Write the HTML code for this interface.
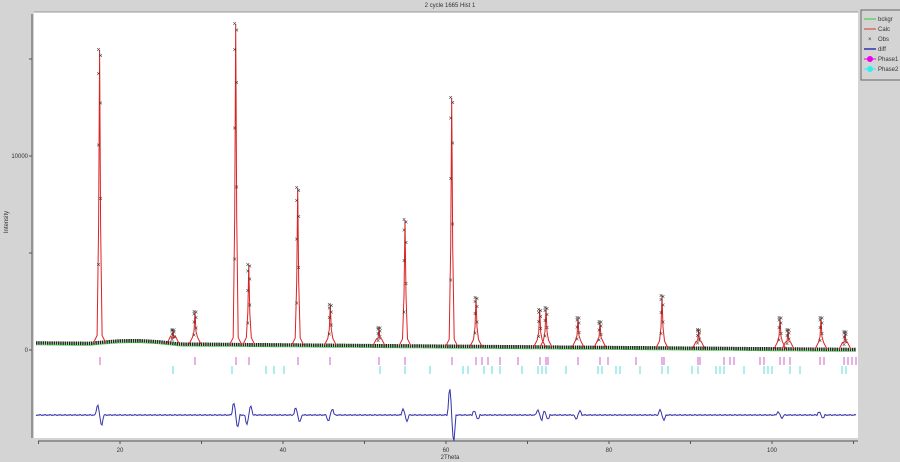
<!DOCTYPE html>
<html><head><meta charset="utf-8"><style>
html,body{margin:0;padding:0;background:#d4d4d4;width:900px;height:462px;overflow:hidden}
svg{display:block}
text{font-family:"Liberation Sans",sans-serif;fill:#333}
</style></head><body>
<svg id="s" width="900" height="462" xmlns="http://www.w3.org/2000/svg">
<rect x="0" y="0" width="900" height="462" fill="#d4d4d4"/>
<rect x="34" y="12" width="824" height="426" fill="#fff"/>
<line x1="32" y1="14" x2="32" y2="438" stroke="#555" stroke-width="1"/>
<line x1="34" y1="12" x2="858" y2="12" stroke="#999"/>
<line x1="38" y1="441" x2="858" y2="441" stroke="#555"/>
<text x="450" y="7" font-size="6" text-anchor="middle">2 cycle 1665 Hist 1</text>
<text x="450" y="459" font-size="6" text-anchor="middle">2Theta</text>
<text x="8" y="222" font-size="6" text-anchor="middle" transform="rotate(-90 8 222)">Intensity</text>
<text x="28" y="158" font-size="6" text-anchor="end">10000</text>
<line x1="29" y1="156" x2="32" y2="156" stroke="#555"/>
<text x="28" y="352" font-size="6" text-anchor="end">0</text>
<line x1="29" y1="350" x2="32" y2="350" stroke="#555"/>
<line x1="29" y1="59" x2="32" y2="59" stroke="#555"/>
<line x1="29" y1="253" x2="32" y2="253" stroke="#555"/>
<g id="g"></g>
<rect x="861" y="10" width="40" height="70" fill="#d4d4d4" stroke="#666"/>
<line x1="864" y1="19" x2="876" y2="19" stroke="#3c3"/><text x="878" y="21" font-size="6">bckgr</text>
<line x1="864" y1="29" x2="876" y2="29" stroke="#d33"/><text x="878" y="31" font-size="6">Calc</text>
<text x="868" y="41" font-size="6">×</text><text x="878" y="41" font-size="6">Obs</text>
<line x1="864" y1="49" x2="876" y2="49" stroke="#33a" stroke-width="1.5"/><text x="878" y="51" font-size="6">diff</text>
<circle cx="870" cy="59" r="3" fill="#e0e"/><line x1="864" y1="59" x2="876" y2="59" stroke="#e0e"/><text x="878" y="61" font-size="6">Phase1</text>
<circle cx="870" cy="69" r="3" fill="#3ee"/><line x1="864" y1="69" x2="876" y2="69" stroke="#3ee"/><text x="878" y="71" font-size="6">Phase2</text>
</svg>
<script>
var g=document.getElementById('g'),h='';
function X(t){return 38.5+(t-10)*8.15}
for(var t=10;t<=110;t+=10){var x=X(t);h+='<line x1="'+x+'" y1="441" x2="'+x+'" y2="444" stroke="#555"/>';
if(t%20==0)h+='<text x="'+x+'" y="452" font-size="6" text-anchor="middle">'+t+'</text>';}
function B(x){var b=343+(x-40)*0.008;if(x>90&&x<180)b-=3*Math.sin((x-90)/90*Math.PI);return b}
var bg='';for(var x=36;x<=856;x+=4)bg+=(x==36?'M':'L')+x+' '+B(x).toFixed(1);
h+='<path d="'+bg+'" fill="none" stroke="#1a2a1a" stroke-width="3.5" stroke-dasharray="1.5 0.7"/>';
h+='<path d="'+bg+'" fill="none" stroke="#3c3" stroke-width="0.6" transform="translate(0,2)"/>';
var P=[[99.6,50],[173,330],[195,312],[235.7,24],[248.8,265],[297.7,188],[330.3,305],[379,328],[405,220],[451.7,98],[476,298],[539.7,310],[546,308],[578,318],[600,322],[662,296],[698.6,330],[780,318],[788,330],[821,318],[845,332]];
var d='',o='';
P.forEach(function(p){var x=p[0],b=B(x),top=p[1];
d+='M'+(x-6)+' '+b+'L'+(x-2.5)+' '+(b-7)+'L'+(x-1)+' '+(b-(b-top)*0.4)+'L'+x+' '+top+'L'+(x+1)+' '+(b-(b-top)*0.4)+'L'+(x+2.5)+' '+(b-7)+'L'+(x+6)+' '+b;
var n=7;for(var i=0;i<n;i++){var yy=top+(b-top)*i*i/(n*n);o+='<text x="'+(x+(i%2?1:-1)*1)+'" y="'+(yy+2)+'" font-size="7" text-anchor="middle" fill="#333">×</text>';}
});
h+='<path d="'+d+'" fill="none" stroke="#d22" stroke-width="1"/>'+o;
var M=[100,195,236,249,298,330,379,405,452,476,482,488,500,518,540,546,548,578,600,608,636,662,664,698,700,724,730,734,760,764,780,784,790,820,824,844,848,852,856];
var C=[173,232,266,274,284,380,405,430,463,468,484,492,500,522,538,542,546,566,598,602,616,620,640,662,668,692,698,716,720,724,744,764,768,772,790,800,842,846];
M.forEach(function(x){h+='<line x1="'+x+'" y1="357" x2="'+x+'" y2="365" stroke="#c6c" stroke-width="1"/>'});
C.forEach(function(x){h+='<line x1="'+x+'" y1="366" x2="'+x+'" y2="374" stroke="#5dd" stroke-width="1"/>'});
var W=[[99.6,10],[235.7,12],[248.8,-9],[297.7,7],[330.3,-6],[405,6],[451.7,26],[476,4],[539.7,5],[546,4],[578,-4],[662,5],[780,3],[821,3]];
var dd='';
for(var x=36;x<=856;x+=1){var y=415+((x*7)%5-2)*0.25;
W.forEach(function(w){var c=w[0],a=w[1];if(Math.abs(x-c)<=4){y+=a*Math.sin((x-c)/4*Math.PI);}});
dd+=(x==36?'M':'L')+x+' '+y.toFixed(1);}
h+='<path d="'+dd+'" fill="none" stroke="#33a" stroke-width="1"/>';
g.innerHTML=h;
</script>
</body></html>
